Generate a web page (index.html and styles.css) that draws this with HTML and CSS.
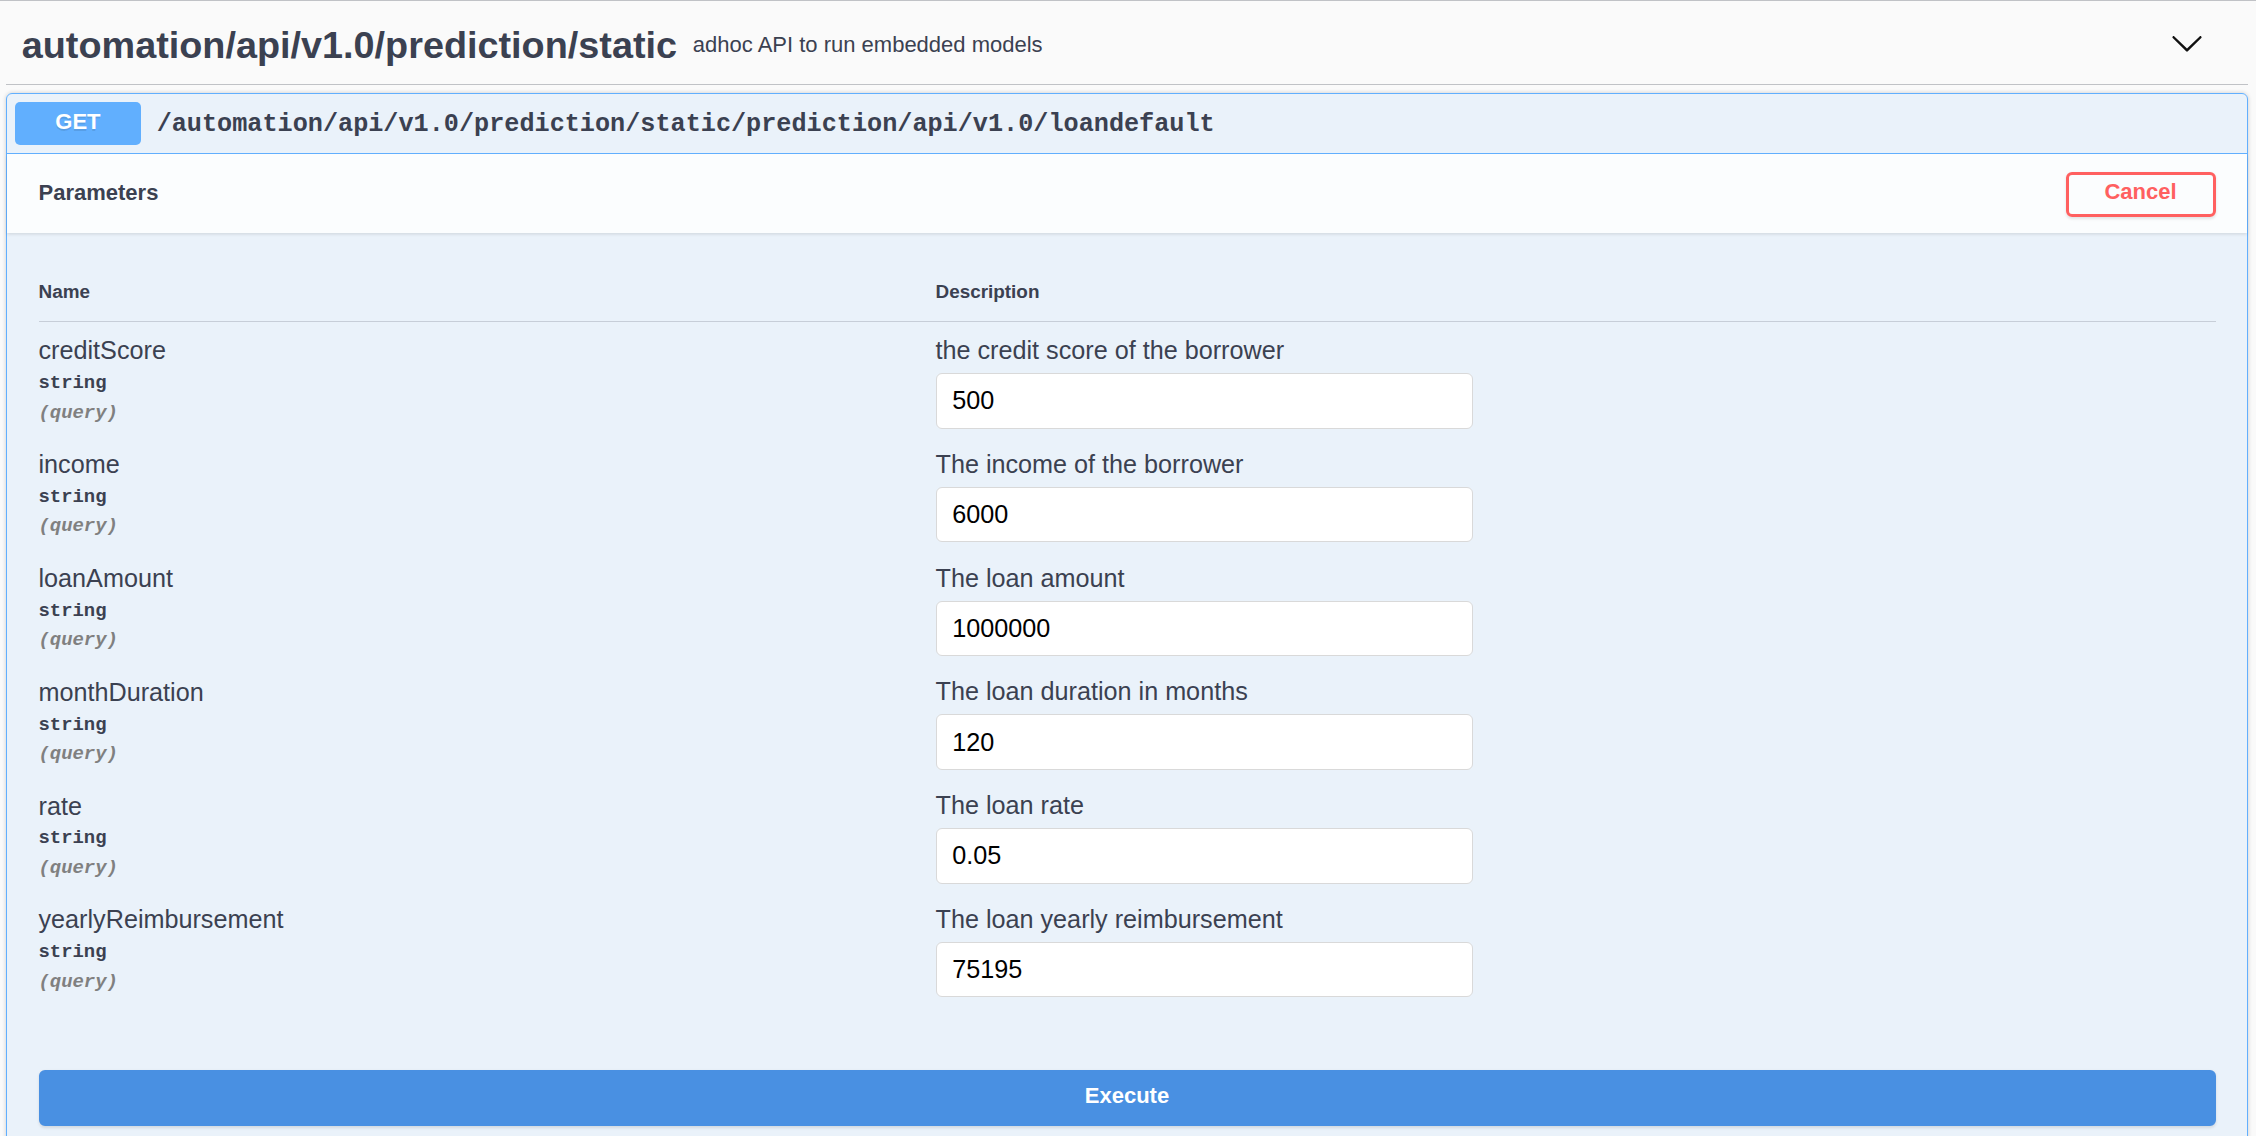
FILE: index.html
```html
<!DOCTYPE html>
<html lang="en">
<head>
<meta charset="utf-8">
<title>Swagger - prediction static</title>
<link rel="stylesheet" href="styles.css">
</head>
<body>
<div class="page">
  <div class="tag">
    <h3 class="tag-title">automation/api/v1.0/prediction/static</h3>
    <small class="tag-desc">adhoc API to run embedded models</small>
    <svg class="arrow" viewBox="0 0 20 20" aria-hidden="true"><path d="M17.418 6.109c.272-.268.709-.268.979 0s.271.701 0 .969l-7.908 7.83c-.27.268-.707.268-.979 0l-7.908-7.83c-.27-.268-.27-.701 0-.969.271-.268.709-.268.979 0L10 13.25l7.418-7.141z"/></svg>
  </div>

  <div class="opblock">
    <div class="summary">
      <span class="method">GET</span>
      <span class="path">/automation/api/v1.0/prediction/static/prediction/api/v1.0/loandefault</span>
    </div>

    <div class="section-header">
      <h4 class="section-title">Parameters</h4>
      <button class="btn cancel">Cancel</button>
    </div>

    <div class="table-container">
      <div class="params-head">
        <div>Name</div>
        <div>Description</div>
      </div>

      <div class="param-row">
        <div class="p-name-col">
          <div class="p-name">creditScore</div>
          <div class="p-type">string</div>
          <div class="p-in">(query)</div>
        </div>
        <div class="p-desc-col">
          <div class="p-desc">the credit score of the borrower</div>
          <input class="p-input" type="text" value="500">
        </div>
      </div>

      <div class="param-row">
        <div class="p-name-col">
          <div class="p-name">income</div>
          <div class="p-type">string</div>
          <div class="p-in">(query)</div>
        </div>
        <div class="p-desc-col">
          <div class="p-desc">The income of the borrower</div>
          <input class="p-input" type="text" value="6000">
        </div>
      </div>

      <div class="param-row">
        <div class="p-name-col">
          <div class="p-name">loanAmount</div>
          <div class="p-type">string</div>
          <div class="p-in">(query)</div>
        </div>
        <div class="p-desc-col">
          <div class="p-desc">The loan amount</div>
          <input class="p-input" type="text" value="1000000">
        </div>
      </div>

      <div class="param-row">
        <div class="p-name-col">
          <div class="p-name">monthDuration</div>
          <div class="p-type">string</div>
          <div class="p-in">(query)</div>
        </div>
        <div class="p-desc-col">
          <div class="p-desc">The loan duration in months</div>
          <input class="p-input" type="text" value="120">
        </div>
      </div>

      <div class="param-row">
        <div class="p-name-col">
          <div class="p-name">rate</div>
          <div class="p-type">string</div>
          <div class="p-in">(query)</div>
        </div>
        <div class="p-desc-col">
          <div class="p-desc">The loan rate</div>
          <input class="p-input" type="text" value="0.05">
        </div>
      </div>

      <div class="param-row">
        <div class="p-name-col">
          <div class="p-name">yearlyReimbursement</div>
          <div class="p-type">string</div>
          <div class="p-in">(query)</div>
        </div>
        <div class="p-desc-col">
          <div class="p-desc">The loan yearly reimbursement</div>
          <input class="p-input" type="text" value="75195">
        </div>
      </div>
    </div>

    <div class="execute-wrapper">
      <button class="btn execute">Execute</button>
    </div>
  </div>
</div>
</body>
</html>
```
FILE: styles.css
```css
html, body {
  margin: 0;
  padding: 0;
}

body {
  background: #fafafa;
  font-family: "Liberation Sans", Arial, sans-serif;
  color: #3b4151;
  overflow: hidden;
}

.page {
  border-top: 1px solid rgba(59, 65, 81, 0.3);
  padding: 0 8px 0 6px;
}

/* ---------- tag header ---------- */
.tag {
  display: flex;
  align-items: center;
  height: 83px;
  padding: 0 44px 0 15.75px;
  border-bottom: 1px solid rgba(59, 65, 81, 0.3);
}

.tag-title {
  margin: 0;
  font-size: 37.8px;
  font-weight: 700;
  line-height: 43px;
  padding-top: 5px;
}

.tag-desc {
  flex: 1;
  font-size: 22px;
  font-weight: 400;
  padding: 5px 15.75px 0;
}

.arrow {
  width: 34px;
  height: 34px;
  margin-top: 1px;
  fill: #111;
}

/* ---------- operation block ---------- */
.opblock {
  margin-top: 8px;
  border: 1px solid #61affe;
  border-radius: 6px;
  background: rgba(97, 175, 254, 0.1);
  box-shadow: 0 0 4.7px rgba(0, 0, 0, 0.19);
}

.summary {
  display: flex;
  align-items: center;
  padding: 7.9px;
  border-bottom: 1px solid #61affe;
}

.method {
  box-sizing: border-box;
  width: 126px;
  height: 43px;
  display: flex;
  align-items: center;
  justify-content: center;
  padding-bottom: 3px;
  background: #61affe;
  color: #fff;
  font-size: 22px;
  font-weight: 700;
  border-radius: 5px;
  text-shadow: 0 1.5px 0 rgba(0, 0, 0, 0.1);
}

.path {
  font-family: "Liberation Mono", "Courier New", monospace;
  font-weight: 700;
  font-size: 25.2px;
  padding: 2px 15.75px 0;
  color: #3b4151;
}

.section-header {
  display: flex;
  align-items: center;
  box-sizing: border-box;
  height: 79px;
  padding: 0 31.5px;
  background: rgba(255, 255, 255, 0.8);
  box-shadow: 0 1.5px 3px rgba(0, 0, 0, 0.1);
  position: relative;
}

.section-title {
  flex: 1;
  margin: 0;
  font-size: 22px;
  font-weight: 700;
}

.btn {
  box-sizing: border-box;
  font-family: inherit;
  font-size: 22px;
  font-weight: 700;
  border: 3px solid gray;
  border-radius: 6px;
  background: transparent;
  box-shadow: 0 1.5px 3px rgba(0, 0, 0, 0.1);
  cursor: pointer;
}

.cancel {
  width: 150px;
  height: 45px;
  padding: 0 0 4px;
  margin-top: 2px;
  color: #ff6060;
  border-color: #ff6060;
}

/* ---------- parameters table ---------- */
.table-container {
  padding: 31.5px 31.5px 33.6px;
}

.params-head {
  display: grid;
  grid-template-columns: 897px 1fr;
  padding: 16.5px 0 18.5px;
  border-bottom: 1px solid rgba(59, 65, 81, 0.2);
  font-size: 18.9px;
  font-weight: 700;
  line-height: 21.7px;
}

.param-row {
  display: grid;
  grid-template-columns: 897px 1fr;
  padding: 13px 0 7.2px;
}

.p-name-col {
  padding-top: 1.5px;
}

.p-name,
.p-desc {
  font-size: 25.2px;
  line-height: 29px;
}

.p-desc {
  padding-top: 1px;
}

.p-type,
.p-in {
  font-family: "Liberation Mono", "Courier New", monospace;
  font-weight: 700;
  font-size: 18.9px;
  line-height: 21.4px;
}

.p-type {
  padding: 7.9px 0;
}

.p-in {
  font-style: italic;
  color: #808080;
}

.p-input {
  display: block;
  box-sizing: border-box;
  width: 537px;
  height: 55.4px;
  margin: 8.2px 0 0;
  padding: 0 15.75px;
  border: 1px solid #d9d9d9;
  border-radius: 6px;
  background: #fff;
  font-family: inherit;
  font-size: 25.2px;
  color: #000;
  outline: none;
}

/* ---------- execute ---------- */
.execute-wrapper {
  padding: 31.5px;
}

.execute {
  display: block;
  width: 100%;
  height: 56px;
  padding: 0 0 4px;
  background: #4990e2;
  border-color: #4990e2;
  color: #fff;
}
```
